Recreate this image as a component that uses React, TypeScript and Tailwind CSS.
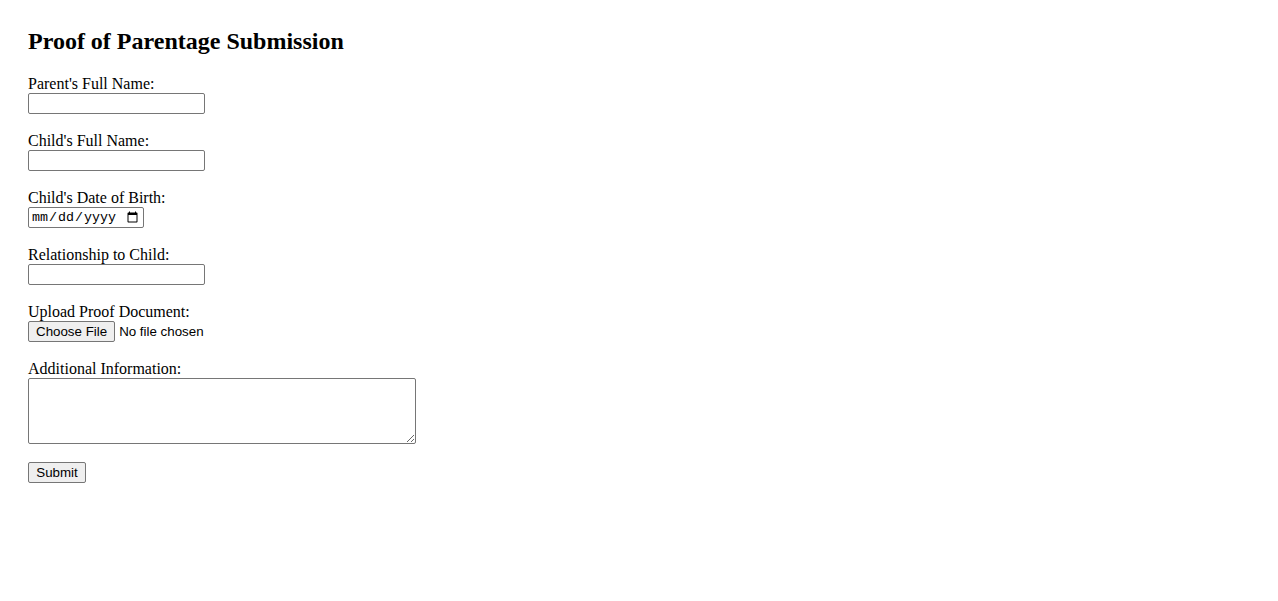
export default function App() {
  const fields = [
    { id: "parentName", label: "Parent's Full Name:", type: "text" },
    { id: "childName", label: "Child's Full Name:", type: "text" },
    { id: "childDob", label: "Child's Date of Birth:", type: "date" },
    { id: "relationship", label: "Relationship to Child:", type: "text" },
  ];

  return (
    <div className="min-h-screen bg-white text-black font-['Liberation_Serif',serif] px-[28px] pt-[28px]">
      <h2 className="text-[24px] font-bold leading-[27px] mb-[20px]">Proof of Parentage Submission</h2>

      <form className="flex flex-col items-start" onSubmit={(e) => e.preventDefault()}>
        {fields.map((f) => (
          <div key={f.id} className="flex flex-col items-start mb-[18px]">
            <label htmlFor={f.id} className="text-[16px] leading-[18px] h-[18px]">
              {f.label}
            </label>
            {f.type === "date" ? (
              <input
                id={f.id}
                type="date"
                className="h-[21px] w-[116px] border border-[#767676] rounded-[2px] px-[2px] text-[13.33px] font-['Liberation_Mono',monospace] bg-white"
              />
            ) : (
              <input
                id={f.id}
                type="text"
                className="h-[21px] w-[177px] border border-[#767676] rounded-[2px] px-[2px] text-[13.33px] font-['Liberation_Sans',sans-serif] bg-white"
              />
            )}
          </div>
        ))}

        <div className="flex flex-col items-start mb-[18px]">
          <label htmlFor="proof" className="text-[16px] leading-[18px] h-[18px]">
            Upload Proof Document:
          </label>
          <input
            id="proof"
            type="file"
            className="h-[21px] w-[250px] text-[13.33px] font-['Liberation_Sans',sans-serif] file:h-[21px] file:border file:border-[#767676] file:rounded-[2px] file:bg-[#efefef] file:px-[7px] file:mr-[4px] file:text-black"
          />
        </div>

        <div className="flex flex-col items-start mb-[18px]">
          <label htmlFor="info" className="text-[16px] leading-[18px] h-[18px]">
            Additional Information:
          </label>
          <textarea
            id="info"
            className="h-[66px] w-[388px] border border-[#767676] rounded-[2px] px-[2px] text-[13.33px] font-['Liberation_Mono',monospace] bg-white"
          />
        </div>

        <button
          type="submit"
          className="h-[21px] w-[58px] border border-[#767676] rounded-[2px] bg-[#efefef] text-[13.33px] font-['Liberation_Sans',sans-serif] leading-none"
        >
          Submit
        </button>
      </form>
    </div>
  );
}
